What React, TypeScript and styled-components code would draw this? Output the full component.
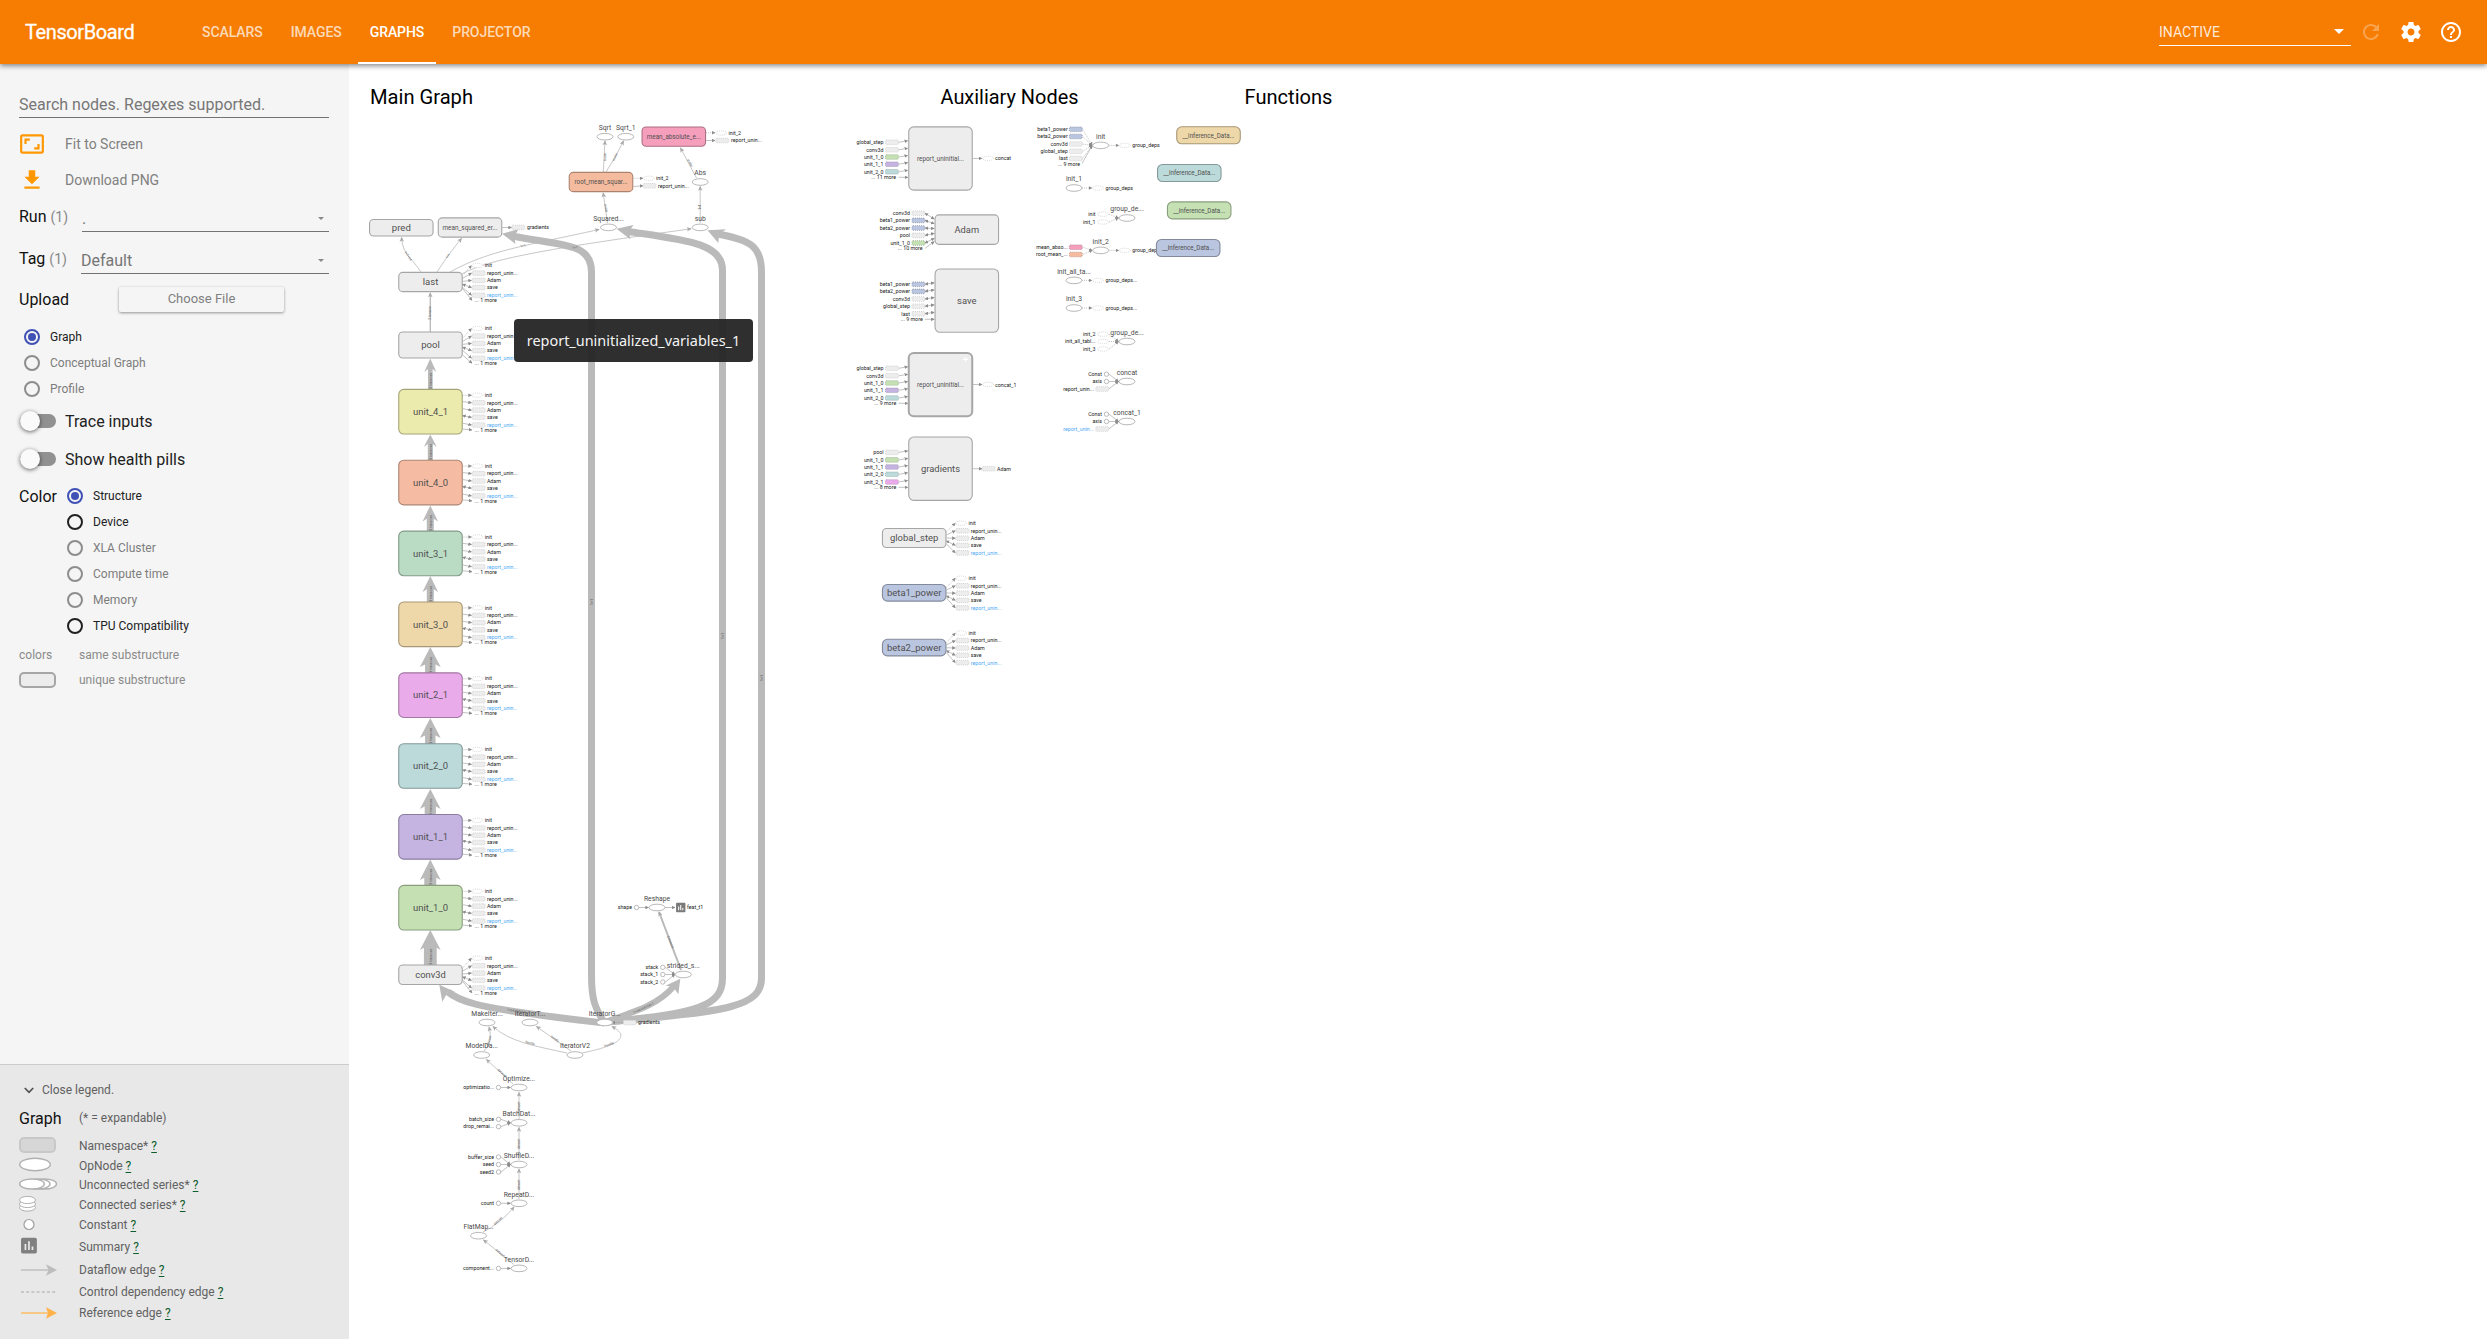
import React from 'react';
import styled, { createGlobalStyle } from 'styled-components';

const Global = createGlobalStyle`
  * { box-sizing: border-box; }
  html, body { margin: 0; padding: 0; background: #fff; }
  body { font-family: Roboto, sans-serif; overflow: hidden; }
`;

/* ---------- layout ---------- */
const Page = styled.div`
  display: flex;
  flex-direction: column;
  height: 100vh;
`;
const Header = styled.header`
  display: flex;
  align-items: center;
  flex: none;
  height: 64px;
  padding: 0 24px 0 25px;
  background: #f77d02;
  color: #fff;
  position: relative;
  z-index: 2;
  box-shadow: 0 2px 5px rgba(0, 0, 0, 0.45);
`;
const Brand = styled.div`
  width: 165px;
  font-size: 20px;
  font-weight: 400;
  letter-spacing: -0.4px;
  -webkit-text-stroke: 0.3px #fff;
`;
const Tab = styled.div<{ $active?: boolean }>`
  display: flex;
  align-items: center;
  height: 64px;
  padding: 2px 12px 0;
  margin-right: 4px;
  font-size: 14px;
  font-weight: 500;
  letter-spacing: -0.07px;
  color: ${(p) => (p.$active ? '#fff' : 'rgba(255,255,255,0.72)')};
  border-bottom: 2px solid ${(p) => (p.$active ? '#fff' : 'transparent')};
`;
const Spacer = styled.div`
  flex: 1;
`;
const Reload = styled.div`
  display: flex;
  align-items: center;
  justify-content: space-between;
  width: 192px;
  height: 27px;
  margin: 0 8px 0 0;
  border-bottom: 1px solid #fff;
  font-size: 14px;
  color: rgba(255, 255, 255, 0.85);
`;
const HeaderIcons = styled.div`
  display: flex;
  gap: 16px;
`;
const Body = styled.div`
  display: flex;
  flex: 1;
  min-height: 0;
`;
const Sidebar = styled.aside`
  display: flex;
  flex-direction: column;
  width: 349px;
  flex: none;
  background: #f5f5f5;
`;
const Controls = styled.div`
  flex: 1;
  padding: 27px 20px 0 19px;
`;
const Search = styled.div`
  height: 27px;
  padding-top: 5px;
  line-height: 18px;
  font-size: 16px;
  color: #777;
  border-bottom: 1px solid #737373;
  margin-bottom: 8px;
`;
const Action = styled.div`
  display: flex;
  align-items: center;
  height: 36px;
  gap: 20px;
  font-size: 14px;
  color: #808080;
`;
const FieldRow = styled.div<{ $top: number; $h: number }>`
  display: flex;
  align-items: stretch;
  margin-top: ${(p) => p.$top}px;
  height: ${(p) => p.$h}px;
`;
const Title = styled.div`
  font-size: 16px;
  line-height: 20px;
  color: #111;
`;
const FieldTitle = styled(Title)<{ $w: number; $pad: number }>`
  width: ${(p) => p.$w}px;
  padding-top: ${(p) => p.$pad}px;
  white-space: nowrap;
  span {
    font-size: 14px;
    color: #888;
    margin-left: 4px;
  }
`;
const Field = styled.div<{ $pad: number }>`
  flex: 1;
  display: flex;
  justify-content: space-between;
  padding-top: ${(p) => p.$pad}px;
  line-height: 20px;
  font-size: 16px;
  color: #757575;
  border-bottom: 1px solid #737373;
`;
const Caret = styled.i<{ $light?: boolean }>`
  width: 0;
  height: 0;
  border: ${(p) => (p.$light ? '5px' : '3px')} solid transparent;
  border-top-color: ${(p) => (p.$light ? '#fff' : '#888')};
  border-bottom-width: 0;
  margin-top: ${(p) => (p.$light ? '0' : '8px')};
  margin-right: ${(p) => (p.$light ? '7px' : '5px')};
`;
const UploadRow = styled.div`
  display: flex;
  align-items: center;
  height: 26px;
  margin: 12px 0;
`;
const UploadTitle = styled(Title)`
  padding-top: 2px;
`;
const FileButton = styled.div`
  display: flex;
  align-items: center;
  justify-content: center;
  width: 165px;
  height: 25px;
  margin-left: auto;
  margin-right: 45px;
  padding-bottom: 1px;
  font-size: 13px;
  color: #808080;
  border-radius: 2px;
  box-shadow: 0 1px 3px rgba(0, 0, 0, 0.4);
`;
const RadioRow = styled.div<{ $muted?: boolean }>`
  display: flex;
  align-items: center;
  height: 26px;
  gap: 10px;
  font-size: 12px;
  color: ${(p) => (p.$muted ? '#7d7d7d' : '#212121')};
`;
const Dot = styled.span<{ $on?: boolean; $muted?: boolean }>`
  display: flex;
  align-items: center;
  justify-content: center;
  width: 16px;
  height: 16px;
  border-radius: 50%;
  border: 2px solid ${(p) => (p.$on ? '#3f51b5' : p.$muted ? '#8d8d8d' : '#212121')};
  &::after {
    content: '';
    width: 8px;
    height: 8px;
    border-radius: 50%;
    background: ${(p) => (p.$on ? '#3f51b5' : 'transparent')};
  }
`;
const Indent = styled.div`
  padding-left: 5px;
`;
const Toggle = styled.div`
  display: flex;
  align-items: center;
  height: 38px;
  gap: 9px;
  padding-left: 1px;
  font-size: 16px;
  color: #212121;
`;
const Track = styled.span`
  display: flex;
  align-items: center;
  width: 36px;
  height: 14px;
  border-radius: 7px;
  background: #919191;
  &::before {
    content: '';
    width: 20px;
    height: 20px;
    flex: none;
    border-radius: 50%;
    background: #fafafa;
    box-shadow: 0 1px 4px rgba(0, 0, 0, 0.6);
  }
`;
const ColorBlock = styled.div`
  display: grid;
  grid-template-columns: 48px 1fr;
  margin: 5px 0 3px;
`;
const ColorTitle = styled(Title)`
  padding-top: 4px;
`;
const SubRow = styled.div`
  display: grid;
  grid-template-columns: 60px 1fr;
  align-items: center;
  height: 25px;
  font-size: 12px;
  color: #8a8a8a;
`;
const Swatch = styled.span<{ $bg: string; $line: string }>`
  width: 37px;
  height: 16px;
  border-radius: 5px;
  border: 2px solid ${(p) => p.$line};
  background: ${(p) => p.$bg};
`;
const Legend = styled.div`
  height: 275px;
  padding: 13px 20px 0 19px;
  background: #e8e8e8;
  border-top: 1px solid #ccc;
  font-size: 12px;
  color: #616161;
`;
const CloseLegend = styled.div`
  display: flex;
  align-items: center;
  height: 24px;
  gap: 8px;
  padding-left: 5px;
  margin-bottom: 4px;
`;
const LegendRow = styled.div<{ $h: number }>`
  display: grid;
  grid-template-columns: 60px 1fr;
  align-items: center;
  height: ${(p) => p.$h}px;
  > svg, > ${Swatch} { margin-top: -2px; }
`;
const LegendHead = styled(LegendRow)`
  margin-bottom: 6px;
`;
const LegendTitle = styled(Title)`
  padding-top: 1px;
`;
const Help = styled.a`
  color: #0f5c2c;
  text-decoration: underline;
  text-underline-offset: 2px;
`;
const Canvas = styled.main`
  flex: 1;
  position: relative;
  background: #fff;
`;
const Graph = styled.svg`
  display: block;
  font-family: Roboto, sans-serif;
`;
const Tooltip = styled.div`
  position: absolute;
  left: 165px;
  top: 255px;
  width: 239px;
  height: 43px;
  display: flex;
  align-items: center;
  justify-content: center;
  border-radius: 4px;
  background: rgba(36, 36, 36, 0.95);
  color: #f4f4f4;
  font: 14.45px 'Noto Sans', sans-serif;
`;

/* ---------- icons ---------- */
const Icon = ({ d, size = 24, color = '#fff' }: { d: string; size?: number; color?: string }) => (
  <svg width={size} height={size} viewBox="0 0 24 24" fill={color}>
    <path d={d} />
  </svg>
);
const FIT = 'M19 12h-2v3h-3v2h5v-5zM7 9h3V7H5v5h2V9zm14-6H3c-1.1 0-2 .9-2 2v14c0 1.1.9 2 2 2h18c1.1 0 2-.9 2-2V5c0-1.1-.9-2-2-2zm0 16.01H3V4.99h18v14.02z';
const DOWNLOAD = 'M19 9h-4V3H9v6H5l7 7 7-7zM5 18v2h14v-2H5z';
const REFRESH = 'M17.65 6.35C16.2 4.9 14.21 4 12 4c-4.42 0-7.99 3.58-7.99 8s3.57 8 7.99 8c3.73 0 6.84-2.55 7.73-6h-2.08c-.82 2.33-3.04 4-5.65 4-3.31 0-6-2.69-6-6s2.69-6 6-6c1.66 0 3.14.69 4.22 1.78L13 11h7V4l-2.35 2.35z';
const GEAR = 'M19.43 12.98c.04-.32.07-.64.07-.98s-.03-.66-.07-.98l2.11-1.65c.19-.15.24-.42.12-.64l-2-3.46c-.12-.22-.39-.3-.61-.22l-2.49 1c-.52-.4-1.08-.73-1.69-.98l-.38-2.65C14.46 2.18 14.25 2 14 2h-4c-.25 0-.46.18-.49.42l-.38 2.65c-.61.25-1.17.59-1.69.98l-2.49-1c-.23-.09-.49 0-.61.22l-2 3.46c-.13.22-.07.49.12.64l2.11 1.65c-.04.32-.07.65-.07.98s.03.66.07.98l-2.11 1.65c-.19.15-.24.42-.12.64l2 3.46c.12.22.39.3.61.22l2.49-1c.52.4 1.08.73 1.69.98l.38 2.65c.03.24.24.42.49.42h4c.25 0 .46-.18.49-.42l.38-2.65c.61-.25 1.17-.59 1.69-.98l2.49 1c.23.09.49 0 .61-.22l2-3.46c.12-.22.07-.49-.12-.64l-2.11-1.65zM12 15.5c-1.93 0-3.5-1.57-3.5-3.5s1.57-3.5 3.5-3.5 3.5 1.57 3.5 3.5-1.57 3.5-3.5 3.5z';
const HELP = 'M11 18h2v-2h-2v2zm1-16C6.48 2 2 6.48 2 12s4.48 10 10 10 10-4.48 10-10S17.52 2 12 2zm0 18c-4.41 0-8-3.59-8-8s3.59-8 8-8 8 3.59 8 8-3.59 8-8 8zm0-14c-2.21 0-4 1.79-4 4h2c0-1.1.9-2 2-2s2 .9 2 2c0 2-3 1.75-3 5h2c0-2.25 3-2.5 3-5 0-2.21-1.79-4-4-4z';
const SUMMARY = 'M19 3H5c-1.1 0-2 .9-2 2v14c0 1.1.9 2 2 2h14c1.1 0 2-.9 2-2V5c0-1.1-.9-2-2-2zM9 17H7v-7h2v7zm4 0h-2V7h2v10zm4 0h-2v-4h2v4z';

/* ---------- graph primitives ---------- */
const GRAY = '#ededed';
const C = {
  yellow: '#ebebad', salmon: '#f5bca3', mint: '#badcc5', sand: '#eed8a9', orchid: '#eaabea',
  teal: '#bddada', violet: '#c5b4e2', green: '#c5e1b4', pink: '#f59fbd', orange: '#f5bb9e', blue: '#bac5df',
};
const darker = (hex: string) => {
  const n = parseInt(hex.slice(1), 16);
  const f = (v: number) => Math.round(v * 0.7);
  return `rgb(${f(n >> 16)},${f((n >> 8) & 255)},${f(n & 255)})`;
};

type Anchor = 'start' | 'middle' | 'end';
const T = ({ x, y, s, size, w, anchor = 'start', fill = '#333' }: { x: number; y: number; s: string; size: number; w?: number; anchor?: Anchor; fill?: string }) => (
  <text x={x} y={y + size * 0.35} fontSize={size} textAnchor={anchor} fill={fill} textLength={w} lengthAdjust="spacingAndGlyphs">{s}</text>
);
const Small = ({ x, y, s, anchor = 'start', fill = '#222' }: { x: number; y: number; s: string; anchor?: Anchor; fill?: string }) => (
  <text x={x} y={y + 1.8} fontSize={5.3} textAnchor={anchor} fill={fill}>{s}</text>
);
const NS = ({ x, y, h, s, fill = GRAY, size = 9.5, w, r = 4, sw = 1.1, lw = 63.5 }: { x: number; y: number; h: number; s: string; fill?: string; size?: number; w?: number; r?: number; sw?: number; lw?: number }) => (
  <g>
    <rect x={x - lw / 2} y={y - h / 2} width={lw} height={h} rx={r} fill={fill} stroke={fill === GRAY ? '#a6a6a6' : darker(fill)} strokeWidth={sw} />
    <T x={x} y={y} s={s} size={size} w={w} anchor="middle" fill="#505050" />
  </g>
);
const Op = ({ x, y, s, dy = 9.1 }: { x: number; y: number; s: string; dy?: number }) => (
  <g>
    <ellipse cx={x} cy={y} rx={8} ry={3.3} fill="#fff" stroke="#b0b0b0" strokeWidth={0.9} />
    <T x={x} y={y - dy} s={s} size={6.8} anchor="middle" fill="#4a4a4a" />
  </g>
);
const MiniRect = ({ x, y, fill = GRAY }: { x: number; y: number; fill?: string }) => (
  <rect x={x - 6.4} y={y - 2.3} width={12.8} height={4.6} rx={1} fill={fill} stroke={fill === GRAY ? '#c4c4c4' : darker(fill)} strokeWidth={0.7} strokeDasharray="1 1" />
);
const MiniOp = ({ x, y }: { x: number; y: number }) => (
  <ellipse cx={x} cy={y} rx={5.4} ry={2.2} fill="#fff" stroke="#c6c6c6" strokeWidth={0.7} strokeDasharray="1 1" />
);
const Link = ({ d, dash, both, w = 0.7 }: { d: string; dash?: boolean; both?: boolean; w?: number }) => (
  <path d={d} fill="none" stroke="#a8a8a8" strokeWidth={w} strokeDasharray={dash ? '1 1' : undefined} markerEnd="url(#tip)" markerStart={both ? 'url(#tip)' : undefined} />
);
const Edge = ({ d, w = 0.8, label, at, rot = 0 }: { d: string; w?: number; label?: string; at?: [number, number]; rot?: number }) => (
  <g>
    <path d={d} fill="none" stroke="#b9b9b9" strokeWidth={w} markerEnd="url(#vee)" />
    {label && at && (
      <text x={at[0]} y={at[1] + 1} fontSize={3.2} textAnchor="middle" fill="#555" transform={`rotate(${rot} ${at[0]} ${at[1]})`}>{label}</text>
    )}
  </g>
);
const UpArrow = ({ tip, back, hw, sw, bottom }: { tip: number; back: number; hw: number; sw: number; bottom: number }) => (
  <g>
    <path d={`M430.3 ${tip}L${430.3 + hw} ${back}L${430.3 + sw} ${back - 3.5 + sw * 0.2}V${bottom}H${430.3 - sw}V${back - 3.5 + sw * 0.2}L${430.3 - hw} ${back}Z`} fill="#bababa" />
    <text x={430.3} y={bottom - 8} fontSize={4} textAnchor="middle" fill="#555" transform={`rotate(-90 430.3 ${bottom - 8}) translate(0 1.4)`}>3 tensors</text>
  </g>
);

const OUTS = ['init', 'report_unin...', 'Adam', 'save', 'report_unin...'];
const Outs = ({ x, y, offs, h, more }: { x: number; y: number; offs: number[]; h: number; more?: boolean }) => (
  <g>
    {OUTS.map((s, i) => {
      const ay = y + offs[i];
      const sy = h > 30 ? ay - (i - 1) * 0.2 - (i ? 1.2 : 0) : y + Math.max(-h / 2 + 3, Math.min(h / 2 - 3, offs[i] * 0.4));
      return (
        <g key={i}>
          <Link d={`M${x + 0.5} ${sy}L${x + 9.5} ${ay}`} dash={i === 0} both={i === 3} />
          {i === 0 ? <MiniOp x={x + 15.3} y={ay} /> : <MiniRect x={x + 16.7} y={ay} />}
          <Small x={x + (i === 0 ? 22.7 : 24.9)} y={ay} s={s} fill={i === 4 ? '#4fa9f5' : '#222'} />
        </g>
      );
    })}
    {more && (
      <g>
        <Link d={`M${x + 0.5} ${h > 30 ? y + 17.3 : y + h / 2 - 3}L${x + 10} ${y + 18.3}`} />
        <Small x={x + 12.7} y={y + 18.4} s="... 1 more" />
      </g>
    )}
  </g>
);
const FIVE_MORE = [-16.5, -8.9, -1.6, 5.6, 13.3];
const FIVE = [-14.6, -7, 0.4, 7.6, 15.1];

type In = [string, string];
const Ins = ({ x, ys, items, more, moreY, h, y, both }: { x: number; ys: number[]; items: In[]; more: string; moreY: number; h: number; y: number; both?: boolean }) => (
  <g>
    {items.map(([s, c], i) => {
      const ty = h > 40 ? ys[i] - 1.5 : y + (ys[i] - y) * 0.65;
      return (
        <g key={i}>
          <Link d={`M${x - 10} ${ys[i]}L${x - 0.8} ${ty}`} both={both} />
          <MiniRect x={x - 16.6} y={ys[i]} fill={c} />
          <Small x={x - 25} y={ys[i]} s={s} anchor="end" />
        </g>
      );
    })}
    <Link d={`M${x - 10} ${moreY}L${x - 0.8} ${h > 40 ? moreY : y + h / 2 - 3}`} />
    <Small x={x - 12.3} y={moreY} s={`... ${more} more`} anchor="end" />
  </g>
);
const Consts = ({ x, y, items, ys }: { x: number; y: number; items: string[]; ys: number[] }) => (
  <g>
    {items.map((s, i) => (
      <g key={s}>
        <Link d={`M${x - 18} ${ys[i]}L${x - 8.5} ${y}`} />
        <circle cx={x - 20.5} cy={ys[i]} r={2.2} fill="#fff" stroke="#a8a8a8" strokeWidth={0.8} />
        <Small x={x - 25} y={ys[i]} s={s} anchor="end" />
      </g>
    ))}
  </g>
);
const OutOp = ({ x, y, s }: { x: number; y: number; s: string }) => (
  <g>
    <Link d={`M${x + 8} ${y}L${x + 18} ${y}`} dash />
    <MiniOp x={x + 24} y={y} />
    <Small x={x + 31.5} y={y} s={s} />
  </g>
);
const InOps = ({ x, y, items, ys }: { x: number; y: number; items: string[]; ys: number[] }) => (
  <g>
    {items.map((s, i) => (
      <g key={s}>
        <Link d={`M${x - 18} ${ys[i]}L${x - 8.5} ${y}`} dash />
        <MiniOp x={x - 24} y={ys[i]} />
        <Small x={x - 31.5} y={ys[i]} s={s} anchor="end" />
      </g>
    ))}
  </g>
);
const InRects = ({ x, y, items, ys }: { x: number; y: number; items: In[]; ys: number[] }) => (
  <g>
    {items.map(([s, c], i) => (
      <g key={s}>
        <Link d={`M${x - 18} ${ys[i]}L${x - 8.5} ${y}`} dash />
        <MiniRect x={x - 24.9} y={ys[i]} fill={c} />
        <Small x={x - 33} y={ys[i]} s={s} anchor="end" />
      </g>
    ))}
  </g>
);

const UNITS: [string, string][] = [
  ['unit_4_1', C.yellow], ['unit_4_0', C.salmon], ['unit_3_1', C.mint], ['unit_3_0', C.sand],
  ['unit_2_1', C.orchid], ['unit_2_0', C.teal], ['unit_1_1', C.violet], ['unit_1_0', C.green],
];
const ARROWS = [
  { tip: 358.5, back: 372, hw: 6, sw: 2.3, bottom: 389 },
  { tip: 434.5, back: 447, hw: 6.5, sw: 2.5, bottom: 460 },
  { tip: 505.5, back: 521.5, hw: 7.8, sw: 3.5, bottom: 531 },
  { tip: 576, back: 592, hw: 7.8, sw: 3.5, bottom: 602 },
  { tip: 647, back: 667, hw: 10.4, sw: 5.2, bottom: 673 },
  { tip: 718, back: 738, hw: 10.4, sw: 5.2, bottom: 744 },
  { tip: 789, back: 809, hw: 10.4, sw: 5.6, bottom: 815 },
  { tip: 859.5, back: 880, hw: 10.4, sw: 6, bottom: 885 },
  { tip: 930, back: 950, hw: 10.4, sw: 6.4, bottom: 965 },
];

const MainGraph = () => (
  <g>
    <g fill="none" stroke="#bababa" strokeWidth={7}>
      <path d="M604 1022C595 1008 591.5 1000 591.5 975V272C591.5 243 565 246 512 236" />
      <path d="M606 1022C700 1014 722.5 1005 722.5 978V270C722.5 243 685 240 628 231.5" />
      <path d="M606 1022C730 1012 761.5 1006 761.5 978V272C761.5 246 750 240 718 234" />
      <path d="M604 1023C570 1019 500 1011 475 1004C460 1000 454 997 448 992" />
      <path d="M608 1021C640 1010 660 1003 674 986" strokeWidth={6} />
    </g>
    <g fill="#bababa">
      <path d="M502 233.7L518.5 229.3L514 236.5L515.5 244Z" />
      <path d="M616.5 228.7L633.5 225L629 231.5L630.3 239.3Z" />
      <path d="M707.5 230.3L726 229.3L719 234.5L718.3 243Z" />
      <path d="M439.3 984.7L455.7 992.3L447.5 992.5L442.3 1001.7Z" />
      <path d="M680.3 978.7L665.5 985.7L673 986.5L678.3 994.3Z" />
    </g>
    {([[591.5, 602], [722.5, 636], [761.5, 678]] as const).map(([x, y]) => (
      <text key={x} x={x} y={y} fontSize={4} textAnchor="middle" fill="#666" transform={`rotate(-90 ${x} ${y}) translate(0 1.4)`}>1×1</text>
    ))}
    <text x={644} y={1009} fontSize={3.4} fill="#666" textAnchor="middle" transform="rotate(-25 644 1009)">1×64×64×64×1</text>
    <text x={516} y={1012} fontSize={3.4} fill="#666" textAnchor="middle" transform="rotate(7 516 1012)">1×64×64×64</text>
    {ARROWS.map((a) => <UpArrow key={a.tip} {...a} />)}

    <Edge d="M430.3 332V293" w={1.3} label="3 tensors" at={[430.3, 313]} rot={-90} />
    <Edge d="M421 272C412 258 402 254 401.7 237.5" label="1×1×64" at={[408, 256]} rot={55} />
    <Edge d="M437 272Q450 252 461.5 238.5" label="1×1" at={[448, 256]} rot={-55} />
    <Edge d="M450 272C490 250 525 246 599 229.5" label="1×1" at={[523, 246]} rot={-12} />
    <Edge d="M462 274C490 258 560 247 691 228.8" label="1×1" at={[575, 247.5]} rot={-10} />
    <Edge d="M607.5 223L603.2 193" label="scalar" at={[606, 208]} rot={80} />
    <Edge d="M603.3 172L605 141" label="scalar" at={[605, 157]} rot={-88} />
    <Edge d="M606 172Q616 157 623.5 141" label="scalar" at={[615, 157]} rot={-63} />
    <Edge d="M700.2 223V186.5" label="1×1" at={[700.2, 207]} rot={-90} />
    <Edge d="M696.5 178L680.5 148" label="scalar" at={[690, 163]} rot={62} />
    <Edge d="M681 970L659 912" w={2} label="5 tensors" at={[670.5, 942]} rot={68} />
    <Edge d="M484 1051C490 1044 492 1038 489 1027" label="dataset" at={[489, 1041]} rot={-75} />
    <Edge d="M567 1053C535 1046 510 1042 493 1026.5" label="handle" at={[530, 1043]} rot={15} />
    <Edge d="M571 1051L536.5 1026.5" label="handle" at={[555, 1039]} rot={37} />
    <Edge d="M582 1053C612 1047 634 1038 612 1026.5" label="handle" at={[609, 1044.5]} rot={-20} />
    <Edge d="M513 1084L486.5 1059.5" label="dataset" at={[502, 1073]} rot={42} />
    <Edge d="M519 1119V1092.5" label="dataset" at={[519, 1107]} rot={-90} />
    <Edge d="M519 1160V1127.5" label="dataset" at={[519, 1144]} rot={-90} />
    <Edge d="M519 1199V1169" label="dataset" at={[519, 1185]} rot={-90} />
    <Edge d="M483 1232Q500 1224 514 1207" label="dataset" at={[498, 1221]} rot={-42} />
    <Edge d="M514 1264.5L483.5 1240" label="dataset" at={[500, 1253]} rot={40} />

    <NS x={401.3} y={227.7} h={16.5} s="pred" w={19} size={9} />
    <NS x={470} y={227.5} h={19.3} s="mean_squared_er..." size={6.8} w={55} />
    <Link d="M502 227.5H511.5" />
    <MiniRect x={518.3} y={227.5} />
    <Small x={527} y={227.3} s="gradients" />
    <NS x={601} y={182} h={19.3} s="root_mean_squar..." size={6.8} w={53} fill={C.orange} />
    <Link d="M633.5 178.3H643" dash /><MiniOp x={648.8} y={178.3} /><Small x={656} y={178.3} s="init_2" />
    <Link d="M633.5 186.5L643 185.8" /><MiniRect x={649.6} y={185.8} /><Small x={658} y={186} s="report_unin..." />
    <NS x={673.8} y={136.6} h={19.3} s="mean_absolute_e..." size={6.8} w={54} fill={C.pink} />
    <Link d="M706 132.8H715" dash /><MiniOp x={721.3} y={133} /><Small x={728.5} y={133} s="init_2" />
    <Link d="M706 140.5H715" /><MiniRect x={722.2} y={140.5} /><Small x={731} y={140.3} s="report_unin..." />

    <NS x={430.5} y={282} h={19.3} s="last" w={15.5} size={9.5} />
    <Outs x={462} y={282} h={19} offs={FIVE_MORE} more />
    <NS x={430.5} y={345} h={26} s="pool" w={18.5} size={9.5} />
    <Outs x={462} y={345} h={26} offs={FIVE_MORE} more />
    {UNITS.map(([s, c], i) => {
      const y = 411.7 + i * 70.86;
      return (
        <g key={s}>
          <NS x={430.5} y={y} h={44.6} s={s} fill={c} w={35} r={5} />
          <Outs x={462} y={y} h={44} offs={FIVE_MORE} more />
        </g>
      );
    })}
    <NS x={430.5} y={974.7} h={19.5} s="conv3d" w={30.5} />
    <Outs x={462} y={974.7} h={19} offs={FIVE_MORE} more />

    <Op x={605} y={136.7} s="Sqrt" />
    <Op x={625.8} y={136.7} s="Sqrt_1" />
    <Op x={608.5} y={227.4} s="Squared..." />
    <Op x={700.2} y={227.4} s="sub" />
    <Op x={700.2} y={182} s="Abs" />
    <Consts x={657} y={907.5} items={['shape']} ys={[907.5]} />
    <Link d="M665 907.5H675" />
    <Op x={657} y={907.5} s="Reshape" />
    <g transform="translate(674.5 901.3) scale(0.52)"><path d={SUMMARY} fill="#7a7a7a" /></g>
    <Small x={687} y={907.3} s="feat_t1" />
    <Consts x={683.3} y={974.5} items={['stack', 'stack_1', 'stack_2']} ys={[967.3, 974.5, 982]} />
    <Op x={683.3} y={974.5} s="strided_s..." />
    <Link d="M637 1022.5H612" w={0.6} />
    <MiniRect x={629.7} y={1022.5} />
    <Small x={638} y={1022.3} s="gradients" />
    <Op x={604.7} y={1022.5} s="IteratorG..." />
    <Op x={487} y={1022.5} s="MakeIter..." />
    <Op x={530} y={1022.5} s="IteratorT..." />
    <Op x={575} y={1055} s="IteratorV2" />
    <Op x={481.7} y={1055} s="ModelDa..." />
    <Consts x={519} y={1087.5} items={['optimizatio...']} ys={[1087.5]} />
    <Op x={519} y={1087.5} s="Optimize..." />
    <Consts x={519} y={1122.8} items={['batch_size', 'drop_remai...']} ys={[1119.3, 1126.6]} />
    <Op x={519} y={1122.8} s="BatchDat..." />
    <Consts x={519} y={1164.5} items={['buffer_size', 'seed', 'seed2']} ys={[1157, 1164.5, 1172]} />
    <Op x={519} y={1164.5} s="ShuffleD..." />
    <Consts x={519} y={1203.3} items={['count']} ys={[1203.3]} />
    <Op x={519} y={1203.3} s="RepeatD..." />
    <Op x={478.5} y={1235.7} s="FlatMap..." />
    <Consts x={519} y={1268.4} items={['component...']} ys={[1268.4]} />
    <Op x={519} y={1268.4} s="TensorD..." />
  </g>
);

const UNINIT: In[] = [['global_step', GRAY], ['conv3d', GRAY], ['unit_1_0', C.green], ['unit_1_1', C.violet], ['unit_2_0', C.teal]];

const Auxiliary = () => (
  <g>
    <NS x={940.5} y={158.5} h={63.3} s="report_uninitial..." size={6.8} w={47} r={5} />
    <Ins x={908.5} y={158.5} h={63} ys={[142.3, 149.8, 157, 164.2, 171.8]} items={UNINIT} more="11" moreY={177.3} />
    <Link d="M972.5 158.4H982" /><MiniOp x={988} y={158.4} /><Small x={995} y={158.2} s="concat" />

    <NS x={966.8} y={229.6} h={29.5} s="Adam" w={24.5} size={9.5} />
    <Ins x={935} y={229.6} h={30} ys={[213.3, 220.4, 228, 235.4, 243]} more="10" moreY={248.3} both
      items={[['conv3d', GRAY], ['beta1_power', C.blue], ['beta2_power', C.blue], ['pool', GRAY], ['unit_1_0', C.green]]} />

    <NS x={966.8} y={300.6} h={63.3} s="save" w={19.5} size={9.5} r={5} />
    <Ins x={935} y={300.6} h={63} ys={[284.3, 291.4, 299, 306.3, 313.8]} more="9" moreY={319.3} both
      items={[['beta1_power', C.blue], ['beta2_power', C.blue], ['conv3d', GRAY], ['global_step', GRAY], ['last', GRAY]]} />

    <NS x={940.5} y={384.6} h={63.3} s="report_uninitial..." size={6.8} w={47} r={5} sw={2} />
    <path d="M965.5 357v4.8M963.1 359.4h4.8" stroke="#fff" strokeWidth={1.2} />
    <Ins x={908.5} y={384.6} h={63} ys={[368.3, 375.8, 383, 390.3, 398]} items={UNINIT} more="9" moreY={403.3} />
    <Link d="M973 384.5H982" /><MiniOp x={988} y={384.5} /><Small x={995} y={384.7} s="concat_1" />

    <NS x={940.5} y={468.7} h={63.3} s="gradients" w={39} size={9.5} r={5} />
    <Ins x={908.5} y={468.7} h={63} ys={[452.4, 459.9, 467, 474.3, 482]} more="8" moreY={487.3}
      items={[['pool', GRAY], ['unit_1_0', C.green], ['unit_1_1', C.violet], ['unit_2_0', C.teal], ['unit_2_1', C.orchid]]} />
    <Link d="M972.5 468.7H982" /><MiniRect x={988.7} y={468.7} /><Small x={997} y={469} s="Adam" />

    <NS x={914.2} y={538} h={19} s="global_step" w={48.5} size={9.5} />
    <Outs x={945.8} y={537.8} h={19} offs={FIVE} />
    <NS x={914.2} y={592.8} h={16.6} s="beta1_power" w={54.5} size={9.5} fill={C.blue} r={5} />
    <Outs x={945.8} y={592.8} h={16} offs={FIVE} />
    <NS x={914.2} y={647.6} h={16.6} s="beta2_power" w={54.5} size={9.5} fill={C.blue} r={5} />
    <Outs x={945.8} y={647.6} h={16} offs={FIVE} />

    <InRects x={1100.7} y={145.4} ys={[129.3, 136.5, 144, 151.3, 158.5]}
      items={[['beta1_power', C.blue], ['beta2_power', C.blue], ['conv3d', GRAY], ['global_step', GRAY], ['last', GRAY]]} />
    <Link d="M1082 163.5L1092.2 145.4" />
    <Small x={1080} y={164.2} s="... 9 more" anchor="end" />
    <OutOp x={1100.7} y={145.4} s="group_deps" />
    <Op x={1100.7} y={145.4} s="init" />
    <OutOp x={1074} y={188} s="group_deps" />
    <Op x={1074} y={188} s="init_1" />
    <InOps x={1127} y={218} items={['init', 'init_1']} ys={[214.2, 222]} />
    <Op x={1127} y={218} s="group_de..." />
    <InRects x={1100.7} y={250.4} ys={[247.2, 254.5]} items={[['mean_abso...', '#f59fbd'], ['root_mean_...', C.orange]]} />
    <OutOp x={1100.7} y={250.4} s="group_deps..." />
    <Op x={1100.7} y={250.4} s="init_2" />
    <OutOp x={1074} y={280.4} s="group_deps..." />
    <Op x={1074} y={280.4} s="init_all_ta..." />
    <OutOp x={1074} y={308} s="group_deps..." />
    <Op x={1074} y={308} s="init_3" />
    <InOps x={1127} y={341.5} items={['init_2', 'init_all_tabl...', 'init_3']} ys={[334.2, 341.5, 349]} />
    <Op x={1127} y={341.5} s="group_de..." />
    {[381.5, 421.5].map((y, i) => (
      <g key={y}>
        <Consts x={1127} y={y} items={['Const', 'axis']} ys={[y - 7.3, y]} />
        <Link d={`M1109 ${y + 7.3}L1118.5 ${y}`} />
        <MiniRect x={1102.2} y={y + 7.5} />
        <Small x={1094} y={y + 7.8} s="report_unin..." anchor="end" fill={i ? '#4fa9f5' : '#222'} />
        <Op x={1127} y={y} s={i ? 'concat_1' : 'concat'} />
      </g>
    ))}
  </g>
);

const FUNCTIONS: [number, number, string][] = [
  [1208.5, 135.3, C.sand], [1189.3, 173, C.teal], [1199.2, 210.4, C.green], [1188.2, 248, C.blue],
];

const RADIO_COLORS: [string, boolean, boolean][] = [
  ['Structure', true, false], ['Device', false, false], ['XLA Cluster', false, true],
  ['Compute time', false, true], ['Memory', false, true], ['TPU Compatibility', false, false],
];

const shape = (children: React.ReactNode) => (
  <svg width={40} height={18} viewBox="0 0 40 18" fill="#fff" stroke="#b0b0b0" strokeWidth={1.4}>{children}</svg>
);
const LEGEND: [string, number, React.ReactNode][] = [
  ['Namespace*', 20, <Swatch $bg="#d6d6d6" $line="#c8c8c8" />],
  ['OpNode', 19, shape(<ellipse cx={16} cy={8.5} rx={15.3} ry={6.2} />)],
  ['Unconnected series*', 20, shape(<><ellipse cx={25.5} cy={9} rx={12} ry={5} /><ellipse cx={19} cy={9} rx={12} ry={5} /><ellipse cx={13} cy={9} rx={12.3} ry={5} /></>)],
  ['Connected series*', 19, shape(<g strokeWidth={1}><ellipse cx={8.5} cy={12.5} rx={8} ry={3.6} /><ellipse cx={8.5} cy={9} rx={8} ry={3.6} /><ellipse cx={8.5} cy={5} rx={8} ry={3.6} /></g>)],
  ['Constant', 22, shape(<circle cx={10} cy={9.5} r={5} strokeWidth={1.2} stroke="#a0a0a0" />)],
  ['Summary', 22, <svg width={40} height={18} viewBox="0 0 40 18"><path transform="translate(-0.6 -1.9) scale(0.88)" d={SUMMARY} fill="#808080" /></svg>],
  ['Dataflow edge', 24, shape(<><path d="M2 10H30" stroke="#bdbdbd" /><path d="M27 4.3L38 10L27 15.7L29.5 10Z" fill="#bdbdbd" stroke="none" /></>)],
  ['Control dependency edge', 20, shape(<path d="M2 10H38" stroke="#bdbdbd" strokeDasharray="3 2.2" />)],
  ['Reference edge', 22, shape(<><path d="M2 10H30" stroke="#ffbb5c" /><path d="M27 4.3L38 10L27 15.7L29 10Z" fill="#ffb14a" stroke="none" /></>)],
];

export default function App() {
  return (
    <Page>
      <Global />
      <Header>
        <Brand>TensorBoard</Brand>
        <Tab>SCALARS</Tab>
        <Tab>IMAGES</Tab>
        <Tab $active>GRAPHS</Tab>
        <Tab>PROJECTOR</Tab>
        <Spacer />
        <Reload>INACTIVE<Caret $light /></Reload>
        <HeaderIcons>
          <Icon d={REFRESH} color="rgba(255,255,255,0.3)" />
          <Icon d={GEAR} />
          <Icon d={HELP} />
        </HeaderIcons>
      </Header>
      <Body>
        <Sidebar>
          <Controls>
            <Search>Search nodes. Regexes supported.</Search>
            <Action><Icon d={FIT} size={26} color="#ff9800" />Fit to Screen</Action>
            <Action><Icon d={DOWNLOAD} size={26} color="#ff9800" />Download PNG</Action>
            <FieldRow $top={2} $h={32}>
              <FieldTitle $w={63} $pad={7}>Run<span>(1)</span></FieldTitle>
              <Field $pad={9}>.<Caret /></Field>
            </FieldRow>
            <FieldRow $top={8} $h={34}>
              <FieldTitle $w={62} $pad={9}>Tag<span>(1)</span></FieldTitle>
              <Field $pad={11}>Default<Caret /></Field>
            </FieldRow>
            <UploadRow><UploadTitle>Upload</UploadTitle><FileButton>Choose File</FileButton></UploadRow>
            <Indent>
              <RadioRow><Dot $on />Graph</RadioRow>
              <RadioRow $muted><Dot $muted />Conceptual Graph</RadioRow>
              <RadioRow $muted><Dot $muted />Profile</RadioRow>
            </Indent>
            <Toggle><Track />Trace inputs</Toggle>
            <Toggle><Track />Show health pills</Toggle>
            <ColorBlock>
              <ColorTitle>Color</ColorTitle>
              <div>
                {RADIO_COLORS.map(([s, on, muted]) => (
                  <RadioRow key={s} $muted={muted}><Dot $on={on} $muted={muted} />{s}</RadioRow>
                ))}
              </div>
            </ColorBlock>
            <SubRow><span>colors</span><span>same substructure</span></SubRow>
            <SubRow><Swatch $bg="#ececec" $line="#a6a6a6" /><span>unique substructure</span></SubRow>
          </Controls>
          <Legend>
            <CloseLegend>
              <svg width={10} height={7} viewBox="0 0 10 7" fill="none" stroke="#505050" strokeWidth={1.7}><path d="M0.8 1L5 5.3L9.2 1" /></svg>
              Close legend.
            </CloseLegend>
            <LegendHead $h={24}><LegendTitle>Graph</LegendTitle><span>(* = expandable)</span></LegendHead>
            {LEGEND.map(([s, h, icon]) => (
              <LegendRow key={s} $h={h}>{icon}<span>{s} <Help>?</Help></span></LegendRow>
            ))}
          </Legend>
        </Sidebar>
        <Canvas>
          <Graph width={2138} height={1275} viewBox="349 64 2138 1275">
            <defs>
              <marker id="tip" viewBox="0 0 4 4" refX="3.5" refY="2" markerWidth="3.6" markerHeight="3.6" markerUnits="userSpaceOnUse" orient="auto-start-reverse"><path d="M0 0L4 2L0 4Z" fill="#8c8c8c" /></marker>
              <marker id="vee" viewBox="0 0 10 10" refX="8.5" refY="5" markerWidth="5" markerHeight="5" markerUnits="userSpaceOnUse" orient="auto"><path d="M0 0.5L10 5L0 9.5L2.5 5Z" fill="#a8a8a8" /></marker>
            </defs>
            <T x={370} y={97} s="Main Graph" size={20} w={103} fill="#000" />
            <T x={940.5} y={97} s="Auxiliary Nodes" size={20} w={138} fill="#000" />
            <T x={1244.5} y={97} s="Functions" size={20} w={88} fill="#000" />
            <MainGraph />
            <Auxiliary />
            {FUNCTIONS.map(([x, y, c]) => (
              <NS key={y} x={x} y={y} h={17} s="__inference_Data..." fill={c} size={6.8} w={52} r={5} />
            ))}
          </Graph>
          <Tooltip>report_uninitialized_variables_1</Tooltip>
        </Canvas>
      </Body>
    </Page>
  );
}
